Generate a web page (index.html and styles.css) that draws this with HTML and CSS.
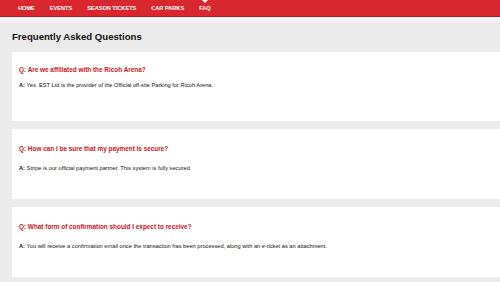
FILE: index.html
```html
<!DOCTYPE html>
<html lang="en">
<head>
    <meta charset="UTF-8">
    <meta name="viewport" content="width=device-width, initial-scale=1.0">
    <title>FAQ</title>
    <link rel="stylesheet" href="styles.css">
</head>
<body>
    <nav class="topnav">
        <a href="#">HOME</a>
        <a href="#">EVENTS</a>
        <a href="#">SEASON TICKETS</a>
        <a href="#">CAR PARKS</a>
        <a href="#" class="active">FAQ</a>
    </nav>

    <main class="content">
        <h1>Frequently Asked Questions</h1>

        <div class="faq">
            <p class="question">Q: Are we affiliated with the Ricoh Arena?</p>
            <p class="answer"><b>A:</b> Yes. EST Ltd is the provider of the Official off-site Parking for Ricoh Arena.</p>
        </div>
        <div class="faq">
            <p class="question">Q: How can I be sure that my payment is secure?</p>
            <p class="answer"><b>A:</b> Stripe is our official payment partner. This system is fully secured.</p>
        </div>
        <div class="faq">
            <p class="question">Q: What form of confirmation should I expect to receive?</p>
            <p class="answer"><b>A:</b> You will receive a confirmation email once the transaction has been processed, along with an e-ticket as an attachment.</p>
        </div>
    </main>
</body>
</html>
```

FILE: styles.css
```css
body {
    margin: 0;
    height: 282px;
    overflow: hidden;
    background: #ebebeb;
    font-family: "Liberation Sans", Arial, Helvetica, sans-serif;
}
.topnav {
    display: flex;
    gap: 15px;
    height: 16px;
    padding-left: 18px;
    align-items: center;
    background: #d9272f;
    border-bottom: 1px solid #b51d24;
    box-shadow: 0 2px 0 #f6f6f6;
}
.topnav a {
    position: relative;
    color: #fff;
    font-size: 5.6px;
    font-weight: bold;
    text-decoration: none;
}
.topnav a.active::before {
    content: "";
    position: absolute;
    top: -5px;
    left: 50%;
    margin-left: -3px;
    border-left: 3px solid transparent;
    border-right: 3px solid transparent;
    border-top: 3px solid #fff;
}
.content {
    padding: 12px 0 0 12px;
    margin-top: 2px;
    background: linear-gradient(#f1f1f1, #ebebeb 6px);
}
h1 {
    margin: 0 0 10px;
    font-size: 9.6px;
    line-height: 11px;
    color: #111;
}
.faq {
    background: #fff;
    height: 70px;
    box-sizing: border-box;
    padding: 16px 7px 0;
    margin-bottom: 8px;
    margin-right: -12px;
}
.faq:last-child {
    margin-bottom: 0;
}
.question {
    margin: 0;
    color: #d0101c;
    font-size: 6.4px;
    font-weight: bold;
    line-height: 8px;
}
.answer {
    margin: 11px 0 0;
    color: #111;
    font-size: 5.7px;
    line-height: 8px;
}
.faq:first-of-type {
    height: 69px;
    padding-top: 14px;
}
.faq:first-of-type .answer {
    margin-top: 7px;
}
```
